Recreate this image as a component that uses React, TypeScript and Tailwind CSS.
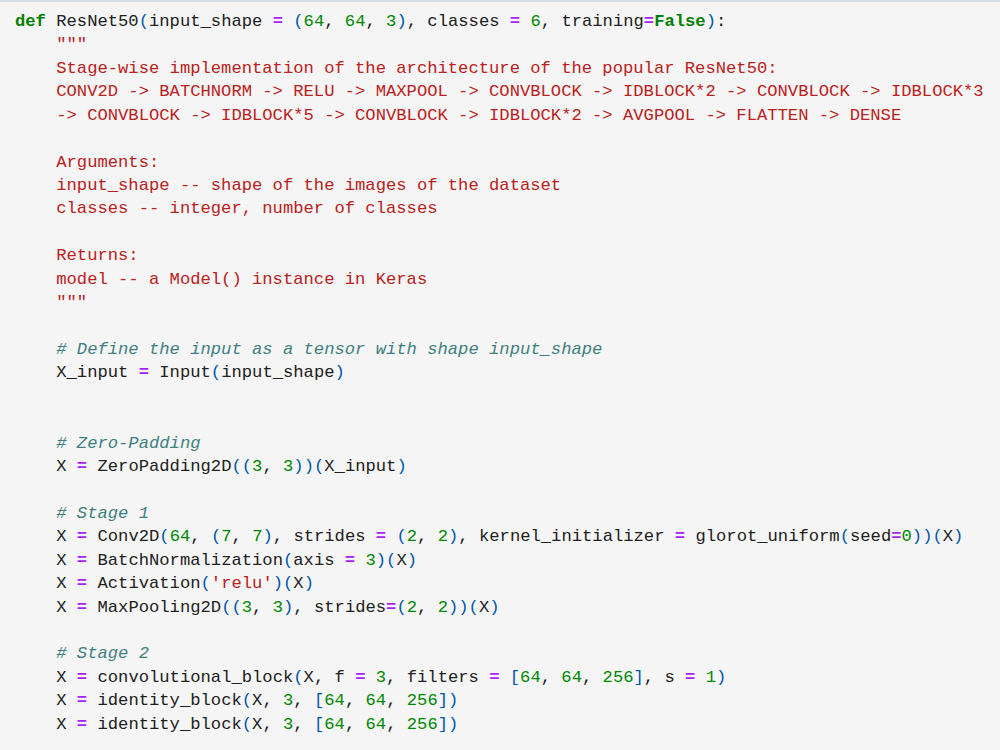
const code = `def ResNet50(input_shape = (64, 64, 3), classes = 6, training=False):
    """
    Stage-wise implementation of the architecture of the popular ResNet50:
    CONV2D -> BATCHNORM -> RELU -> MAXPOOL -> CONVBLOCK -> IDBLOCK*2 -> CONVBLOCK -> IDBLOCK*3
    -> CONVBLOCK -> IDBLOCK*5 -> CONVBLOCK -> IDBLOCK*2 -> AVGPOOL -> FLATTEN -> DENSE

    Arguments:
    input_shape -- shape of the images of the dataset
    classes -- integer, number of classes

    Returns:
    model -- a Model() instance in Keras
    """

    # Define the input as a tensor with shape input_shape
    X_input = Input(input_shape)


    # Zero-Padding
    X = ZeroPadding2D((3, 3))(X_input)

    # Stage 1
    X = Conv2D(64, (7, 7), strides = (2, 2), kernel_initializer = glorot_uniform(seed=0))(X)
    X = BatchNormalization(axis = 3)(X)
    X = Activation('relu')(X)
    X = MaxPooling2D((3, 3), strides=(2, 2))(X)

    # Stage 2
    X = convolutional_block(X, f = 3, filters = [64, 64, 256], s = 1)
    X = identity_block(X, 3, [64, 64, 256])
    X = identity_block(X, 3, [64, 64, 256])`;

type Tok = { t: string; c: string };

const KEYWORDS = new Set(["def", "False", "True", "None", "return"]);

function tokenize(line: string): Tok[] {
  const out: Tok[] = [];
  let i = 0;
  while (i < line.length) {
    const ch = line[i];
    const rest = line.slice(i);
    let m: RegExpMatchArray | null;
    if (ch === "#") {
      out.push({ t: rest, c: "text-[#408080] italic" });
      break;
    } else if ((m = rest.match(/^\s+/))) {
      out.push({ t: m[0], c: "" });
      i += m[0].length;
    } else if ((m = rest.match(/^'[^']*'/))) {
      out.push({ t: m[0], c: "text-[#ba2121]" });
      i += m[0].length;
    } else if ((m = rest.match(/^[A-Za-z_][A-Za-z0-9_]*/))) {
      const w = m[0];
      out.push({ t: w, c: KEYWORDS.has(w) ? "text-[#008000] font-bold" : "text-[#212121]" });
      i += w.length;
    } else if ((m = rest.match(/^\d+/))) {
      out.push({ t: m[0], c: "text-[#008800]" });
      i += m[0].length;
    } else if (ch === "=") {
      out.push({ t: ch, c: "text-[#aa22ff] font-bold" });
      i++;
    } else if ("()[]".includes(ch)) {
      out.push({ t: ch, c: "text-[#0055aa]" });
      i++;
    } else {
      out.push({ t: ch, c: "text-[#212121]" });
      i++;
    }
  }
  return out;
}

export default function App() {
  const lines = code.split("\n");
  let inDoc = false;
  return (
    <div className="w-[1000px] h-[750px] overflow-hidden bg-[#f5f5f5] border-t-2 border-[#d9dee4]">
      <pre className="pt-[8px] pl-[15px] font-['Liberation_Mono',monospace] text-[17.18px] leading-[23.43px] text-[#212121]">
        {lines.map((line, idx) => {
          const isQuote = line.trim() === '"""';
          let content: React.ReactNode;
          if (isQuote || inDoc) {
            content = <span className="text-[#ba2121]">{line}</span>;
            if (isQuote) inDoc = !inDoc;
          } else {
            content = tokenize(line).map((tk, j) => (
              <span key={j} className={tk.c}>
                {tk.t}
              </span>
            ));
          }
          return (
            <div key={idx} className="h-[23.43px] whitespace-pre">
              {content}
            </div>
          );
        })}
      </pre>
    </div>
  );
}
